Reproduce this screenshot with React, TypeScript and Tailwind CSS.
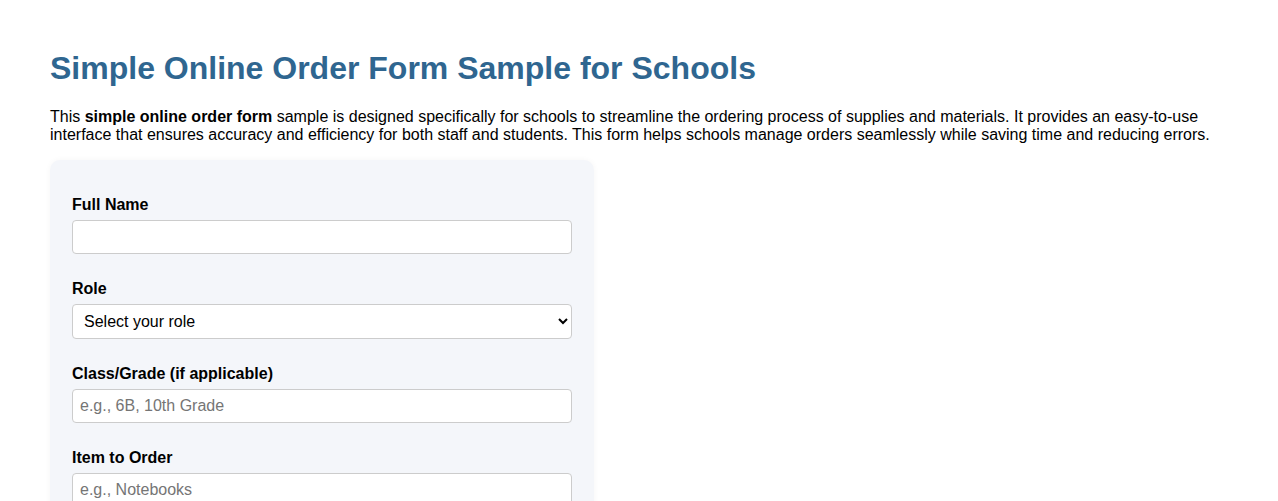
import { useState } from "react";

const fields = [
  { label: "Class/Grade (if applicable)", placeholder: "e.g., 6B, 10th Grade" },
  { label: "Item to Order", placeholder: "e.g., Notebooks" },
  { label: "Quantity", placeholder: "e.g., 20" },
];

export default function App() {
  const [role, setRole] = useState("");

  return (
    <div className="min-h-screen bg-white px-[50px] pt-[50px] font-['Liberation_Sans',Arial,sans-serif] text-black">
      <h1 className="mb-[21px] text-[32px] font-bold leading-[37px] text-[#2f6690]">
        Simple Online Order Form Sample for Schools
      </h1>
      <p className="text-base leading-[18px]">
        This <strong>simple online order form</strong> sample is designed specifically for schools to streamline the
        ordering process of supplies and materials. It provides an easy-to-use interface that ensures accuracy and
        efficiency for both staff and students. This form helps schools manage orders seamlessly while saving time and
        reducing errors.
      </p>

      <form className="mt-4 w-[544px] rounded-[10px] bg-[#f4f6fa] px-[22px] pb-6 pt-[36px] shadow-[0_0_6px_rgba(0,0,0,0.04)]">
        <div className="mb-[26px]">
          <label className="mb-[6px] block text-base font-bold leading-[18px]">Full Name</label>
          <input
            type="text"
            className="block h-[34px] w-full rounded-[4px] border border-[#ccc] bg-white px-[7px] text-base outline-none"
          />
        </div>

        <div className="mb-[26px]">
          <label className="mb-[6px] block text-base font-bold leading-[18px]">Role</label>
          <select
            value={role}
            onChange={(e) => setRole(e.target.value)}
            className="block h-[35px] w-full rounded-[4px] border border-[#ccc] bg-white px-[7px] text-base text-black outline-none"
          >
            <option value="">Select your role</option>
            <option value="teacher">Teacher</option>
            <option value="staff">Staff</option>
            <option value="student">Student</option>
          </select>
        </div>

        {fields.map((field) => (
          <div key={field.label} className="mb-[26px]">
            <label className="mb-[6px] block text-base font-bold leading-[18px]">{field.label}</label>
            <input
              type="text"
              placeholder={field.placeholder}
              className="block h-[34px] w-full rounded-[4px] border border-[#ccc] bg-white px-[7px] text-base outline-none placeholder:text-[#757575]"
            />
          </div>
        ))}
      </form>
    </div>
  );
}
